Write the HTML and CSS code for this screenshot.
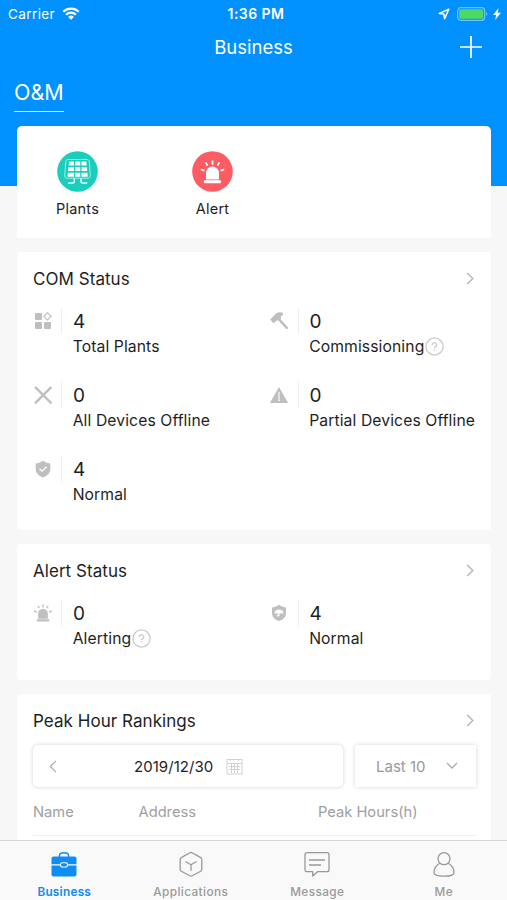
FILE: index.html
```html
<!DOCTYPE html>
<html lang="en">
<head>
<meta charset="utf-8">
<title>Business</title>
<link rel="stylesheet" href="styles.css">
</head>
<body>
<svg class="defs" width="0" height="0">
  <symbol id="chev" viewBox="0 0 8 14"><path d="M1 1l6 6-6 6" fill="none" stroke="currentColor" stroke-width="1.500"/></symbol>
  <symbol id="help" viewBox="0 0 19 19"><circle cx="9.500" cy="9.500" r="8.600" fill="none" stroke="#c9c9c9" stroke-width="1.300"/><path d="M7.300 7.900a2.200 2.100 0 1 1 3.400 1.700c-.8.500-1.200.8-1.200 1.700" fill="none" stroke="#c9c9c9" stroke-width="1.300"/><circle cx="9.500" cy="13" r=".8" fill="#c9c9c9"/></symbol>
  <symbol id="siren" viewBox="0 0 24 24"><path d="M5.500 19.500v-6.500a6.500 6.500 0 0 1 13 0v6.500z"/><rect x="3.500" y="20.300" width="17" height="3" rx="1"/><path d="M12 4.800V.6M7 5.600L5.200 2.400M17 5.600l1.800-3.200M3.900 10.700L.2 9.300M20.100 10.700l3.700-1.400" fill="none" stroke="currentColor" stroke-width="1.800"/></symbol>
</svg>
<div class="screen">
  <header class="top">
    <div class="status">
      <div class="status-left"><span>Carrier</span>
        <svg width="18" height="13" viewBox="0 0 18 13" fill="none" stroke="#fff" stroke-width="2.200"><path d="M1.300 4.700a11 11 0 0 1 15.400 0M4.100 7.700a7 7 0 0 1 9.800 0"/><path d="M9 12.800L6.100 9.900a4.200 4.200 0 0 1 5.800 0z" fill="#fff" stroke="none"/></svg>
      </div>
      <b class="time">1:36 PM</b>
      <div class="status-right">
        <svg width="12" height="12" viewBox="0 0 12 12"><path d="M10.800 1.200L1.300 5.400l4.600.7.700 4.600z" fill="none" stroke="#fff" stroke-width="1.500" stroke-linejoin="round"/></svg>
        <svg width="32" height="14" viewBox="0 0 32 14"><rect x=".7" y=".7" width="27" height="12.600" rx="3" fill="none" stroke="#fff" stroke-opacity=".45" stroke-width="1.200"/><rect x="2.200" y="2.200" width="24" height="9.600" rx="1.500" fill="#4cd964"/><path d="M29.200 4.800q2 2.200 0 4.400z" fill="#fff" fill-opacity=".5"/></svg>
        <svg width="8" height="12" viewBox="0 0 8 12"><path d="M5.600 0L.1 6.900h3L2.200 12l5.700-7.200H4.700z" fill="#fff"/></svg>
      </div>
    </div>
    <div class="nav">
      <h1>Business</h1>
      <svg class="plus" width="22" height="22" viewBox="0 0 22 22"><path d="M11 0v22M0 11h22" stroke="#fff" stroke-width="1.700"/></svg>
    </div>
    <div class="tabs"><span>O&amp;M</span></div>
  </header>

  <main>
    <section class="card shortcuts">
      <div class="shortcut">
        <svg width="41" height="41" viewBox="0 0 41 41"><circle cx="20.500" cy="20.500" r="20.300" fill="#1bcdbd"/><path d="M11 8.500h19q2 0 2.300 2l1 14.500q0 2.200-2 2.200H9.700q-2.200 0-2-2.200l1-14.500q.3-2 2.300-2z" fill="none" stroke="#a8f2ea" stroke-width=".9"/><path d="M12 10.500h5v4h-5.400zM18.200 10.500h5v4h-5zM24.500 10.500h4.800l.4 4h-5.200zM11.300 16.200H17v3.800h-6zM18.200 16.200h5v3.800h-5zM24.500 16.200h5.400l.3 3.800h-5.700zM10.800 21.800H17v4h-6.500zM18.200 21.800h5v4h-5zM24.500 21.800h5.900l.3 4h-6.200z" fill="#fff"/><path d="M17.300 27.500v3.600l-1 1h-5.200M24 27.500v3.600l1 1h5.200" fill="none" stroke="#d8fffa" stroke-width="1.500"/></svg>
        <span>Plants</span>
      </div>
      <div class="shortcut">
        <svg width="41" height="41" viewBox="0 0 41 41"><circle cx="20.500" cy="20.500" r="20.300" fill="#fd5c64"/><g color="#fff" fill="#fff"><use href="#siren" x="8.500" y="9" width="24" height="24"/></g></svg>
        <span>Alert</span>
      </div>
    </section>

    <section class="card com">
      <div class="card-head"><h2>COM Status</h2><svg class="chev"><use href="#chev"/></svg></div>
      <div class="grid">
        <div class="item">
          <svg class="ico" viewBox="0 0 18 18"><rect x="1" y="1" width="7" height="7" rx="1"/><rect x="1" y="10" width="7" height="7" rx="1"/><rect x="10" y="10" width="7" height="7" rx="1"/><path d="M13.500.7L17.200 4.400l-3.700 3.700L9.800 4.400z" fill="none" stroke="currentColor" stroke-width="1.200" stroke-linejoin="round"/></svg>
          <div class="num">4</div><div class="lab">Total Plants</div>
        </div>
        <div class="item">
          <svg class="ico" viewBox="0 0 18 18"><path d="M.2 7.500L6.300 1.300Q9-.2 12.700.7l.4 1.800-2.300 2.300.2 1.800-2.200 2-1.500-.3-4 3z"/><path d="M8.800 7.200l8 8.600" stroke="currentColor" stroke-width="2.500" stroke-linecap="round"/></svg>
          <div class="num">0</div><div class="lab">Commissioning<svg class="help"><use href="#help"/></svg></div>
        </div>
        <div class="item">
          <svg class="ico" viewBox="0 0 18 18"><path d="M1.700 1.700l15 15M16.700 1.700L1.700 16.700" stroke="currentColor" stroke-width="2.400" stroke-linecap="round"/></svg>
          <div class="num">0</div><div class="lab">All Devices Offline</div>
        </div>
        <div class="item">
          <svg class="ico" viewBox="0 0 18 18"><path d="M9 1l9.200 16H-.2z"/><path d="M9 6.300v8.700" stroke="#fff" stroke-width="2" stroke-opacity=".75"/><path d="M9 7v7" stroke="#bfbfbf" stroke-width=".6"/></svg>
          <div class="num">0</div><div class="lab">Partial Devices Offline</div>
        </div>
        <div class="item">
          <svg class="ico" viewBox="0 0 18 18"><path d="M9 .8q3.500 2.500 7.300 2.600v6q0 5-7.300 8-7.300-3-7.300-8v-6Q5.500 3.300 9 .8z"/><path d="M5.500 8.700l2.600 2.500 4.500-4.400" fill="none" stroke="#fff" stroke-width="1.300"/></svg>
          <div class="num">4</div><div class="lab">Normal</div>
        </div>
      </div>
    </section>

    <section class="card alerts">
      <div class="card-head"><h2>Alert Status</h2><svg class="chev"><use href="#chev"/></svg></div>
      <div class="grid">
        <div class="item">
          <svg class="ico"><use href="#siren"/></svg>
          <div class="num">0</div><div class="lab">Alerting<svg class="help"><use href="#help"/></svg></div>
        </div>
        <div class="item">
          <svg class="ico" viewBox="0 0 18 18"><path d="M9 .8q3.300 2.500 7 2.600v6q0 5-7 7.600-7-2.600-7-7.600v-6Q5.700 3.300 9 .8z"/><path d="M4.500 9.400a4.500 4 0 0 1 9 0zM8.300 9h1.300v2q0 1.500-1.500 1.500T6.600 11h1q.7.800.7-.3z" fill="#fff"/></svg>
          <div class="num">4</div><div class="lab">Normal</div>
        </div>
      </div>
    </section>

    <section class="card peak">
      <div class="card-head"><h2>Peak Hour Rankings</h2><svg class="chev"><use href="#chev"/></svg></div>
      <div class="filters">
        <div class="date">
          <svg class="prev" width="8" height="13" viewBox="0 0 8 13"><path d="M7 .8L1.300 6.500 7 12.200" fill="none" stroke="#aaa" stroke-width="1.200"/></svg>
          <span>2019/12/30</span>
          <svg width="17" height="17" viewBox="0 0 17 17" fill="none" stroke="#d2d2d2"><rect x="1" y="1.500" width="15" height="14.500"/><path d="M1 5.500h15M3 8.500h11M3 11.500h11M5.500 6v9M8.500 6v9M11.500 6v9M4.500 1v2M12.500 1v2"/></svg>
        </div>
        <div class="last"><span>Last 10</span><svg width="12" height="8" viewBox="0 0 12 8"><path d="M1 1l5 5 5-5" fill="none" stroke="#aaa" stroke-width="1.300"/></svg></div>
      </div>
      <div class="thead"><span>Name</span><span>Address</span><span>Peak Hours(h)</span></div>
    </section>
  </main>

  <nav class="bar">
    <div class="tab active">
      <svg width="28" height="26" viewBox="0 0 28 26"><path d="M9.500 6V4.500q0-2.700 4.500-2.700t4.500 2.700V6" fill="none" stroke="currentColor" stroke-width="1.500"/><path d="M3.500 5.500h21q2 0 2 2v5.700H18q0-2-2-2h-4q-2 0-2 2H1.500V7.500q0-2 2-2z" fill="currentColor"/><path d="M1.500 14.500H10q0 2 2 2h4q2 0 2-2h8.500v9q0 2-2 2h-21q-2 0-2-2z" fill="currentColor"/><rect x="11.200" y="12.300" width="5.600" height="3.100" rx="1" fill="currentColor"/></svg>
      <span>Business</span>
    </div>
    <div class="tab">
      <svg width="28" height="26" viewBox="0 0 28 26" fill="none" stroke="currentColor" stroke-width="1.300" stroke-linejoin="round"><path d="M12.900 1.800q1.100-.6 2.200 0l8.600 4.800q1.100.7 1.100 1.900v9.800q0 1.200-1.100 1.900l-8.600 4.600q-1.100.6-2.200 0l-8.600-4.600q-1.100-.7-1.100-1.900V8.500q0-1.200 1.100-1.900z"/><path d="M8.500 10.500l5.500 3.200 5.500-3.200M14 13.700v6"/></svg>
      <span>Applications</span>
    </div>
    <div class="tab">
      <svg width="28" height="26" viewBox="0 0 28 26" fill="none" stroke="currentColor" stroke-width="1.300" stroke-linejoin="round"><path d="M4 1.700h20q2 0 2 2v15q0 2-2 2H14.500L9.700 25v-4.300H4q-2 0-2-2v-15q0-2 2-2zM6 9h16M6 14h12"/></svg>
      <span>Message</span>
    </div>
    <div class="tab">
      <svg width="28" height="26" viewBox="0 0 28 26" fill="none" stroke="currentColor" stroke-width="1.300"><circle cx="14" cy="7.700" r="6"/><path d="M9.700 12.200Q4 15.500 4 21.500 4 25.200 14 25.200t10-3.700q0-6-5.700-9.300"/></svg>
      <span>Me</span>
    </div>
  </nav>
</div>
</body>
</html>
```
FILE: styles.css
```css
* { box-sizing: border-box; }
body { margin: 0; font-family: Inter, "Liberation Sans", sans-serif; color: #1e1e1e; }
h1, h2 { margin: 0; font-weight: 400; }
svg { display: block; flex: none; }
.defs { position: absolute; }
.screen { height: 900px; display: flex; flex-direction: column; overflow: hidden; background: #f7f7f7; }

.top { flex: none; height: 186px; background: #0091ff; color: #fff; }
.status { height: 27px; padding: 0 6px 0 8px; display: grid; grid-template-columns: 1fr auto 1fr; align-items: center; font-size: 13.5px; }
.status-left { display: flex; align-items: center; gap: 7px; letter-spacing: .4px; }
.time { font-weight: 600; font-size: 14px; letter-spacing: .45px; padding-left: 3px; }
.status-right { display: flex; align-items: center; justify-content: flex-end; gap: 4px; }
.status-right svg:first-child { margin-right: 3px; }
.nav { height: 40px; padding-right: 25px; display: grid; grid-template-columns: 1fr auto 1fr; align-items: center; }
.nav h1 { grid-column: 2; font-size: 18.500px; margin-left: 25px; }
.plus { justify-self: end; }
.tabs { padding: 11px 14px 0; display: flex; }
.tabs span { height: 34px; line-height: 29px; font-size: 21.500px; border-bottom: 1.500px solid #d9efff; }

main { position: relative; flex: 1; min-height: 0; margin-top: -60px; padding: 0 16px 0 17px; display: flex; flex-direction: column; gap: 14px; overflow: hidden; }
.card { flex: none; background: #fff; border-radius: 4px; padding: 14px 15px 0 16px; }
.shortcuts { height: 112px; padding: 24.500px 0 0 15.500px; display: flex; align-items: flex-start; gap: 45px; border-radius: 5px 5px 1px 1px; }
.shortcut { width: 90px; display: flex; flex-direction: column; align-items: center; gap: 7px; font-size: 14.500px; line-height: 20px; letter-spacing: .25px; }
.com { height: 278px; }
.alerts { height: 136px; }
.peak { height: 160px; }
.card-head { height: 24px; display: flex; align-items: center; justify-content: space-between; }
.card-head h2 { font-size: 17px; letter-spacing: .05px; padding-top: 1px; }
.chev { width: 8px; height: 13px; color: #b5b5b5; margin-right: 2px; }
.grid { padding-top: 18px; display: grid; grid-template-columns: 236.500px 1fr; grid-auto-rows: 74px; }
.item { display: grid; grid-template-columns: 28px auto; grid-template-rows: 26px 24px; white-space: nowrap; }
.ico { width: 18px; height: 18px; align-self: center; color: #bfbfbf; fill: #bfbfbf; margin-left: .5px; }
.num { border-left: 1px solid #efefef; padding-left: 11px; font-size: 19px; line-height: 28px; height: 26px; }
.lab { grid-column: 2; padding-left: 11.700px; display: flex; align-items: center; font-size: 15.700px; line-height: 25px; letter-spacing: .1px; }
.help { width: 19px; height: 19px; margin-left: .5px; }

.filters { margin-top: 13px; display: flex; gap: 12px; height: 42px; }
.date, .last { display: flex; align-items: center; border-radius: 5px; box-shadow: 0 0 4px rgba(0, 0, 0, .17); }
.date { width: 310px; padding-left: 16px; font-size: 15px; }
.date span { margin: 0 13px 0 77px; letter-spacing: .05px; }
.last { flex: 1; padding: 0 18px 0 21px; justify-content: space-between; border-radius: 2px; font-size: 15px; color: #999; }
.thead { height: 49px; padding-top: 2px; border-bottom: 1px solid #f0f0f0; display: grid; grid-template-columns: 105.500px 179.500px 1fr; align-items: center; font-size: 14.700px; color: #a0a0a0; }

.bar { flex: none; height: 60px; padding-left: 1px; border-top: 1px solid #d5d5d5; background: #f9f9f9; display: grid; grid-template-columns: repeat(4, 1fr); }
.tab { padding-top: 10px; display: flex; flex-direction: column; align-items: center; gap: 7px; font-size: 11.800px; font-weight: 500; line-height: 16px; letter-spacing: .4px; color: #999; }
.active { color: #0f8df5; font-weight: 600; letter-spacing: .25px; }
```
